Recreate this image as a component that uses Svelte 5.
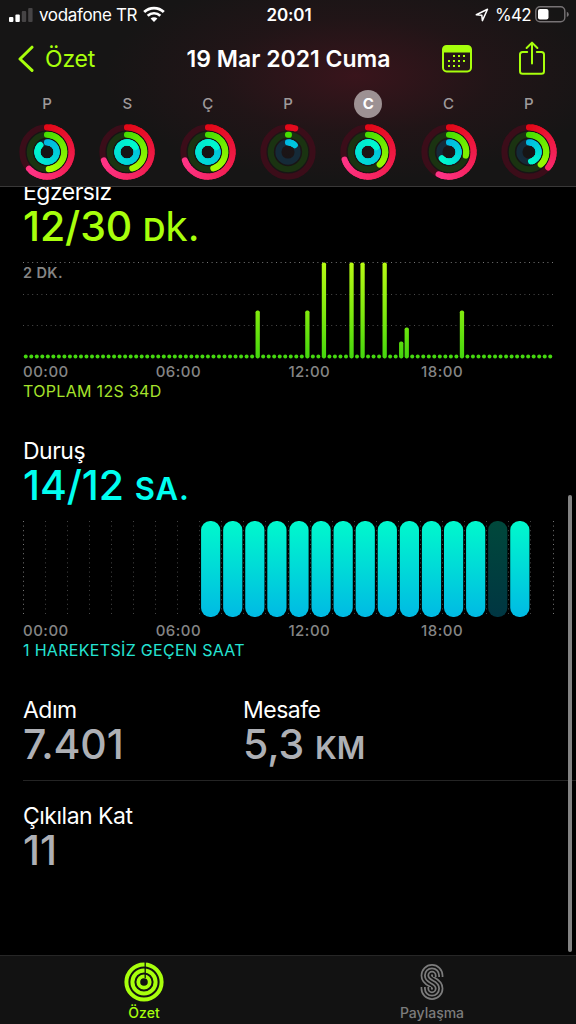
<script>
  const days = [
    { letter: "P", move: 227, exercise: 174, stand: 317 },
    { letter: "S", move: 250, exercise: 162, stand: 420 },
    { letter: "Ç", move: 250, exercise: 162, stand: 420 },
    { letter: "P", move: 17, exercise: 3, stand: 45 },
    { letter: "C", move: 252, exercise: 137, stand: 420 },
    { letter: "C", move: 205, exercise: 102, stand: 229 },
    { letter: "P", move: 129, exercise: 137, stand: 168 },
  ];

  const rings = [
    { key: "move", r: 24.6, from: [226, 8, 22], to: [255, 52, 136], track: "#3b0d19" },
    { key: "exercise", r: 17.2, from: [70, 222, 0], to: [172, 255, 0], track: "#1a3311" },
    { key: "stand", r: 9.6, from: [0, 182, 226], to: [0, 250, 205], track: "#152a38" },
  ];

  let selected = $state(4);

  // quarter-hour slot -> bar height
  const exerciseBars = {
    42: 48,
    51: 48,
    54: 96,
    59: 96,
    61: 96,
    65: 96,
    68: 17,
    69: 31,
    79: 48,
  };
  const quarters = Array.from({ length: 96 }, (_, i) => i);
  const hours = Array.from({ length: 25 }, (_, i) => i);
  const standHours = Array.from({ length: 15 }, (_, i) => i + 8);
  const idleHour = 21;
  const times = ["00:00", "06:00", "12:00", "18:00"];

  const quarterWidth = 530 / 96;
  const hourWidth = 530 / 24;

  function point(r, deg) {
    const a = ((deg - 90) * Math.PI) / 180;
    return `${(28 + r * Math.cos(a)).toFixed(2)} ${(28 + r * Math.sin(a)).toFixed(2)}`;
  }

  // short pieces, so the colour can follow the arc
  function segments(ring, end) {
    const count = Math.max(1, Math.ceil(end / 8));
    const step = end / count;
    const span = Math.max(end, 170);
    return Array.from({ length: count }, (_, i) => {
      const t = (i * step) / span;
      const color = ring.from.map((c, n) => Math.round(c + (ring.to[n] - c) * t));
      return {
        d: `M${point(ring.r, i * step)} A${ring.r} ${ring.r} 0 0 1 ${point(ring.r, (i + 1) * step)}`,
        color: `rgb(${color.join(",")})`,
      };
    });
  }
</script>

<div class="screen">
  <header>
    <div class="status">
      <div class="carrier">
        <svg width="24" height="16" viewBox="0 0 24 16">
          <rect x="0" y="10" width="4.4" height="5" rx="1" fill="#fff" />
          <rect x="6.4" y="7.4" width="4.4" height="7.6" rx="1" fill="#fff" />
          <rect x="12.8" y="4" width="4.4" height="11" rx="1" fill="#464445" />
          <rect x="19.2" y="1" width="4.4" height="14" rx="1" fill="#464445" />
        </svg>
        <span class="carrier-name">vodafone TR</span>
        <svg width="22" height="17" viewBox="0 0 22 17" fill="none" stroke="#fff">
          <path d="M1.2 6.1a14 14 0 0 1 19.6 0" stroke-width="2.8" />
          <path d="M4.7 9.8a9 9 0 0 1 12.6 0" stroke-width="2.7" />
          <path d="M11 16l-3.4-3.5a4.9 4.9 0 0 1 6.8 0z" fill="#fff" stroke="none" />
        </svg>
      </div>
      <span class="clock">20:01</span>
      <div class="battery">
        <svg width="14" height="14" viewBox="0 0 14 14" fill="none" stroke="#fff" stroke-width="1.5" stroke-linejoin="round">
          <path d="M1.3 6.7L12.5 1.3L7.4 12.6L6.8 7.2z" />
        </svg>
        <span class="percent">%42</span>
        <svg width="34" height="17" viewBox="0 0 34 17">
          <rect x="0.8" y="0.8" width="29" height="15" rx="4.2" fill="none" stroke="#777375" stroke-width="1.4" />
          <rect x="3" y="3" width="10.5" height="10.5" rx="2" fill="#fff" />
          <path d="M31.8 5.7q2 .9 2 2.7t-2 2.7z" fill="#777375" />
        </svg>
      </div>
    </div>

    <nav class="title-bar">
      <button class="back" type="button">
        <svg width="16" height="28" viewBox="0 0 16 28" fill="none" stroke="#a8ff0c" stroke-width="3" stroke-linecap="round" stroke-linejoin="round">
          <path d="M14 2.2L2 14L14 25.4" />
        </svg>
        Özet
      </button>
      <h1>19 Mar 2021 Cuma</h1>
      <div class="actions">
        <button type="button" aria-label="Takvim">
          <svg width="30" height="28" viewBox="0 0 30 28">
            <rect x="1" y="1" width="28" height="25.4" rx="3.6" fill="none" stroke="#a8ff0c" stroke-width="2" />
            <path d="M1 7.4V4.5Q1 1 4.5 1h21Q29 1 29 4.5v2.9z" fill="#a8ff0c" />
            <g fill="#a8ff0c">
              {#each [10, 15, 20] as y, row}
                {#each [6, 11, 16, 21] as x, col}
                  {#if !(row === 0 && col === 0) && !(row === 2 && col === 3)}
                    <rect {x} {y} width="2" height="2" />
                  {/if}
                {/each}
              {/each}
            </g>
          </svg>
        </button>
        <button type="button" aria-label="Paylaş">
          <svg width="28" height="35" viewBox="0 0 28 35" fill="none" stroke="#a8ff0c" stroke-width="2" stroke-linecap="round" stroke-linejoin="round">
            <path d="M9.2 11H4.6Q2 11 2 13.6v16.6q0 2.6 2.6 2.6h18.8q2.6 0 2.6-2.6V13.6Q26 11 23.4 11h-4.6" />
            <path d="M14 22.5V2M8.6 7L14 1.6L19.4 7" />
          </svg>
        </button>
      </div>
    </nav>

    <div class="week">
      {#each days as day, i}
        <button class="day" class:selected={i === selected} type="button" onclick={() => (selected = i)}>
          <span>{day.letter}</span>
          <svg width="56" height="56" viewBox="0 0 56 56" fill="none" stroke-width="6.1">
            {#each rings as ring}
              <circle cx="28" cy="28" r={ring.r} stroke={ring.track} />
              {#each segments(ring, day[ring.key]) as seg}
                <path d={seg.d} stroke={seg.color} stroke-linecap="round" />
              {/each}
            {/each}
          </svg>
        </button>
      {/each}
    </div>
  </header>

  <main>
    <section class="exercise">
      <h2>Egzersiz</h2>
      <p class="value">12/30 <small>D</small><span class="unit">k.</span></p>
      <svg class="chart" width="530" height="98" viewBox="0 0 530 98">
        <defs>
          <linearGradient id="exercise-fill" gradientUnits="userSpaceOnUse" x1="0" y1="0" x2="0" y2="98">
            <stop offset="0" stop-color="#b9fa14" />
            <stop offset="0.55" stop-color="#7de90e" />
            <stop offset="1" stop-color="#43d60d" />
          </linearGradient>
        </defs>
        <g stroke-width="1" stroke-dasharray="1 3.6">
          <path d="M0 1.5H530" stroke="#777" />
          <path d="M0 33.5H530" stroke="#4c4c4c" />
          <path d="M0 64.5H530" stroke="#4c4c4c" />
        </g>
        <text x="0" y="17">2 DK.</text>
        {#each quarters as q}
          {@const x = (q + 0.5) * quarterWidth}
          {#if exerciseBars[q]}
            <rect x={x - 2.1} y={97.4 - exerciseBars[q]} width="4.3" height={exerciseBars[q]} rx="1.8" fill="url(#exercise-fill)" />
          {:else}
            <circle cx={x} cy="95.4" r="2" fill="#45d80f" />
          {/if}
        {/each}
      </svg>
      <div class="times">
        {#each times as time}<span>{time}</span>{/each}
      </div>
      <p class="total">TOPLAM 12S 34D</p>
    </section>

    <section class="stand">
      <h2>Duruş</h2>
      <p class="value">14/12 <small>SA.</small></p>
      <svg class="chart" width="531" height="98" viewBox="0 0 531 98">
        <defs>
          <linearGradient id="stand-fill" x1="0" y1="0" x2="0" y2="1">
            <stop offset="0" stop-color="#00f9cc" />
            <stop offset="1" stop-color="#00bae4" />
          </linearGradient>
        </defs>
        {#each hours as h}
          <path d="M{Math.floor(h * hourWidth) + 0.5} 1V95" stroke={h % 24 ? "#444" : "#777"} stroke-dasharray="1 3.6" />
        {/each}
        {#each standHours as h}
          <rect
            x={h * hourWidth + 1.4}
            y="1"
            width="19.2"
            height="96"
            rx="9"
            fill={h === idleHour ? "#000" : "url(#stand-fill)"}
          />
          {#if h === idleHour}
            <rect x={h * hourWidth + 1.4} y="1" width="19.2" height="96" rx="9" fill="url(#stand-fill)" opacity="0.29" />
          {/if}
        {/each}
      </svg>
      <div class="times">
        {#each times as time}<span>{time}</span>{/each}
      </div>
      <p class="total">1 HAREKETSİZ GEÇEN SAAT</p>
    </section>

    <div class="stats">
      <section>
        <h2>Adım</h2>
        <p class="value">7.401</p>
      </section>
      <section>
        <h2>Mesafe</h2>
        <p class="value">5,3 <small>KM</small></p>
      </section>
    </div>
    <div class="stats">
      <section>
        <h2>Çıkılan Kat</h2>
        <p class="value">11</p>
      </section>
    </div>
  </main>

  <footer>
    <button class="tab active" type="button">
      <svg width="40" height="40" viewBox="0 0 40 40" fill="none" stroke="currentColor" stroke-width="4">
        <circle cx="20" cy="20" r="17.6" />
        <circle cx="20" cy="20" r="11.6" />
        <circle cx="20" cy="20" r="5.7" stroke-width="3.8" />
        <path d="M21.2 0V16" stroke="#121212" stroke-width="1.3" />
      </svg>
      Özet
    </button>
    <button class="tab" type="button">
      <svg width="40" height="40" viewBox="0 0 40 40" fill="none">
        {#each [["currentColor", 12], ["#121212", 8.6], ["currentColor", 5.2], ["#121212", 1.6]] as [stroke, width]}
          <path d="M25.4 15V13.6a5.4 5.6 0 0 0-10.8 0c0 7.4 10.8 5.4 10.8 12.8a5.4 5.6 0 0 1-10.8 0V25" {stroke} stroke-width={width} />
        {/each}
      </svg>
      Paylaşma
    </button>
  </footer>

  <div class="scrollbar"></div>
</div>

<style>
  :global(body) {
    margin: 0;
    background: #000;
  }

  .screen {
    position: relative;
    display: flex;
    flex-direction: column;
    width: 576px;
    height: 1024px;
    overflow: hidden;
    background: #000;
    color: #fff;
    font-family: Inter, "Noto Sans", sans-serif;
  }

  button {
    padding: 0;
    border: none;
    background: none;
    color: inherit;
    font: inherit;
  }

  svg {
    display: block;
    flex: none;
  }

  h1,
  h2,
  p {
    margin: 0;
    white-space: nowrap;
  }

  header {
    flex: none;
    box-sizing: border-box;
    height: 187px;
    border-bottom: 1px solid #393838;
    background:
      radial-gradient(ellipse 250px 105px at 355px 76px, rgba(80, 20, 32, 0.6), rgba(60, 20, 28, 0.28) 55%, transparent),
      #161515;
  }

  .status {
    display: grid;
    grid-template-columns: 1fr auto 1fr;
    align-items: center;
    height: 29px;
    padding: 0 7px 0 9px;
    font-size: 17px;
  }

  .carrier,
  .battery {
    display: flex;
    align-items: center;
  }

  .carrier-name {
    margin: 0 6px 0 6px;
    letter-spacing: -0.35px;
  }

  .clock {
    font-weight: 600;
    letter-spacing: -0.1px;
  }

  .battery {
    justify-content: flex-end;
    gap: 4px;
  }

  .percent {
    margin-left: 2px;
    letter-spacing: -0.7px;
  }

  .title-bar {
    display: grid;
    grid-template-columns: 1fr auto 1fr;
    align-items: center;
    height: 59px;
    padding: 0 30px 0 18px;
  }

  .back {
    display: flex;
    align-items: center;
    gap: 11px;
    color: #a8ff0c;
    font-size: 23px;
    letter-spacing: -0.2px;
  }

  h1 {
    margin: 0 -6px 0 6px;
    padding-left: 1px;
    font-size: 23px;
    font-weight: 600;
  }

  .actions {
    display: flex;
    align-items: center;
    justify-content: flex-end;
    gap: 46px;
  }

  .week {
    display: grid;
    grid-template-columns: repeat(7, 1fr);
    padding: 2px 7px 0 7px;
  }

  .day {
    display: flex;
    flex-direction: column;
    align-items: center;
    gap: 6px;
    color: #9f9a9b;
    font-size: 15px;
    font-weight: 500;
  }

  .day span {
    width: 28px;
    height: 28px;
    border-radius: 50%;
    line-height: 28px;
  }

  .day.selected span {
    background: #9d9193;
    color: #fff;
    font-weight: 700;
  }

  main {
    flex: 1;
    min-height: 0;
    overflow: hidden;
    padding-left: 23px;
  }

  main > section {
    height: 259px;
  }

  .exercise {
    margin-top: -8px;
  }

  h2 {
    font-size: 23px;
    font-weight: 400;
    letter-spacing: -0.5px;
    line-height: 26px;
  }

  .value {
    color: #aeb0b5;
    font-size: 41px;
    font-weight: 500;
    letter-spacing: -0.1px;
    line-height: 42px;
  }

  .value small {
    font-size: 31px;
    font-weight: 600;
    line-height: 1;
  }

  .value .unit {
    font-weight: 400;
  }

  .exercise .value {
    color: #a8ff0c;
  }

  .stand .value {
    color: #00fff0;
  }

  .stand small {
    letter-spacing: 1px;
  }

  .chart {
    margin-top: 14px;
  }

  .chart text {
    fill: #858585;
    font-size: 14.5px;
    font-weight: 600;
    letter-spacing: 0.4px;
  }

  .times {
    display: grid;
    grid-template-columns: repeat(4, 132.7px);
    margin-top: 3px;
    color: #858585;
    font-size: 15px;
    font-weight: 500;
    letter-spacing: 0.5px;
    line-height: 20px;
  }

  .total {
    font-size: 16px;
    letter-spacing: 0.32px;
    line-height: 18px;
  }

  .exercise .total {
    color: #a6e22c;
  }

  .stand .total {
    color: #25e3d3;
  }

  .stats {
    display: grid;
    grid-template-columns: 220px 1fr;
    height: 106px;
  }

  .stats:not(:last-child) {
    box-sizing: border-box;
    height: 84px;
    margin-bottom: 22px;
    border-bottom: 1px solid #242424;
  }

  footer {
    display: grid;
    flex: none;
    grid-template-columns: 1fr 1fr;
    box-sizing: border-box;
    height: 69px;
    border-top: 1px solid #262626;
    background: #121212;
  }

  .tab {
    display: flex;
    flex-direction: column;
    align-items: center;
    padding-top: 6px;
    color: #7c7c7c;
    font-size: 14px;
    font-weight: 500;
    line-height: 22px;
  }

  .tab.active {
    color: #a8ff0c;
  }

  .scrollbar {
    position: absolute;
    top: 495px;
    right: 4px;
    width: 4px;
    height: 457px;
    border-radius: 2px;
    background: #838383;
  }
</style>
